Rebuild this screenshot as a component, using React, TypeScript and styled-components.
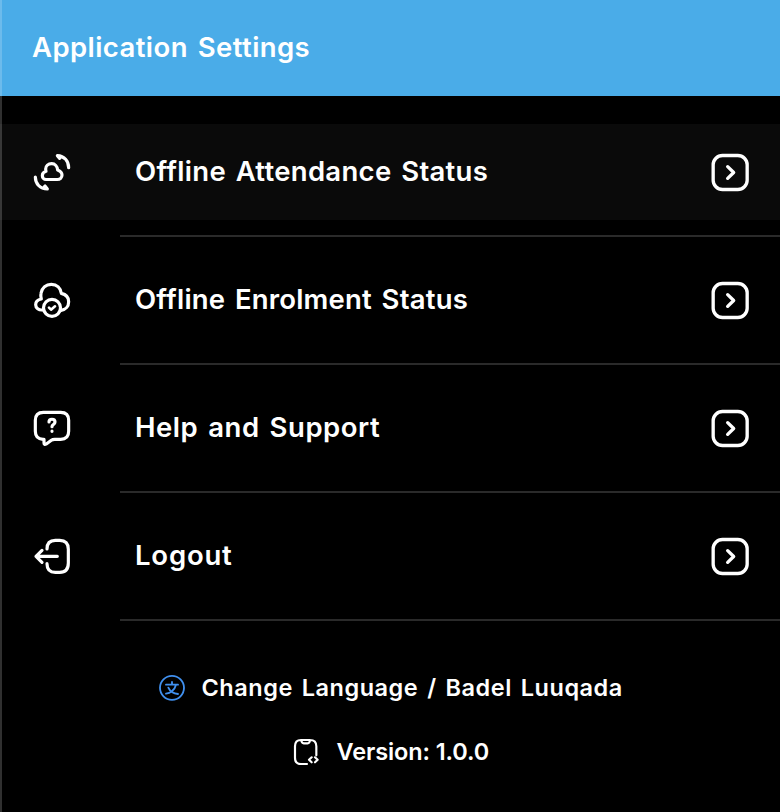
import React from 'react';
import styled, { createGlobalStyle } from 'styled-components';

const GlobalStyle = createGlobalStyle`
  * { box-sizing: border-box; }
  body { margin: 0; background: #000; }
`;

const Screen = styled.main`
  position: relative;
  display: flex;
  flex-direction: column;
  width: 100%;
  min-height: 812px;
  overflow: hidden;
  background: #000;
  color: #fff;
  font-family: Inter, 'Open Sans', sans-serif;
  font-weight: 600;
`;

const EdgeHighlight = styled.span`
  position: absolute;
  inset: 0 auto 0 0;
  width: 2px;
  background: rgba(255, 255, 255, 0.19);
`;

const Header = styled.header`
  display: flex;
  align-items: center;
  height: 96px;
  padding: 0 0 2px 32px;
  background: #4aace8;
`;

const Text = styled.span<{ $tracking: number; $size?: number; $gap?: number }>`
  font-size: ${(p) => p.$size ?? 27.5}px;
  line-height: 40px;
  letter-spacing: ${(p) => p.$tracking}px;
  word-spacing: ${(p) => p.$gap ?? 2.5}px;
  white-space: nowrap;
`;

const Title = styled(Text).attrs({ as: 'h1' })`
  margin: 0;
  font-weight: 600;
`;

const Menu = styled.ul`
  margin: 28px 0 0;
  padding: 0;
  list-style: none;
`;

const MenuItem = styled.li`
  height: 128px;
`;

const MenuRow = styled.div<{ $active?: boolean }>`
  display: grid;
  grid-template-columns: 64px 1fr 60px;
  align-items: center;
  height: 96px;
  padding: 0 20px;
  background: ${(p) => (p.$active ? '#0a0a0a' : 'transparent')};
`;

const MenuLabel = styled(Text)`
  padding: 0 0 2px 51px;
`;

const Divider = styled.hr`
  height: 2px;
  margin: 15px 0 0 120px;
  border: 0;
  background: #2a2a2a;
`;

const Footer = styled.footer`
  display: flex;
  flex-direction: column;
  align-items: flex-start;
  gap: 24px;
  padding-top: 32px;
`;

const FooterRow = styled.div<{ $indent: number }>`
  display: flex;
  align-items: center;
  gap: 13.5px;
  height: 40px;
  padding-left: ${(p) => p.$indent}px;
`;

const Icon = styled.svg<{ $size: number; $color?: string; $line?: number }>`
  display: block;
  flex: none;
  width: ${(p) => p.$size}px;
  height: ${(p) => p.$size}px;
  fill: none;
  stroke: ${(p) => p.$color ?? '#fff'};
  stroke-width: ${(p) => p.$line ?? 9.5};
  stroke-linecap: round;
  stroke-linejoin: round;
`;

const CloudSyncIcon = () => (
  <Icon $size={64} viewBox="0 0 192 192">
    <path d="M78 118.500H112C120 118.500 126 113 126 105C126 98 121 93 113 90C112 79 105 71 95 71C85 71 77 78 77 87C77 90 77.500 92 78 94C71 96 67 101 67 107C67 114 72 118.500 78 118.500Z" />
    <path d="M146 83C146 63 133 48 112 47L119 55L122 50M46 111C46 131 60 147 82 147L75 138L71 143" />
  </Icon>
);

const CloudCheckIcon = () => (
  <Icon $size={64} viewBox="0 0 192 192">
    <path d="M68 126C56 127 47 120 47 110C47 101 53 95 64 93C62 87 62 81 63 76C66 59 78 49 94 49C111 49 122 60 124 76C137 79 146 88 146 101C146 115 137 125 123 127" />
    <circle cx="96" cy="119.500" r="25.500" />
    <path strokeWidth="8" d="M87 119L93 125L105 115" />
  </Icon>
);

const HelpIcon = () => (
  <Icon $size={64} viewBox="0 0 192 192">
    <path d="M70 49H122Q146 49 146 73V106Q146 130 122 130H104Q98 130 94 133L79 144Q72 148 72 141V130H69Q46 129 46 106V73Q46 49 70 49Z" />
    <path d="M87 78C87 67 105 67 105 78C105 86 96 85 96 92M96 105.500V106" />
  </Icon>
);

const LogoutIcon = () => (
  <Icon $size={64} viewBox="0 0 192 192">
    <path d="M81 75C81 57 89 49 106 49H119C137 49 145 58 145 76V117C145 136 137 145 119 145H106C89 145 81 136 81 119" />
    <path d="M112 97H48M66 79L48 97L66 115" />
  </Icon>
);

const ChevronBoxIcon = () => (
  <Icon $size={60} $line={10} viewBox="0 0 180 180">
    <rect x="39.500" y="40.500" width="102" height="102" rx="28" />
    <path d="M83 74L101 91.500L83 109" />
  </Icon>
);

const LanguageIcon = () => (
  <Icon $size={32} $color="#4090ef" $line={5.5} viewBox="18 5 96 96">
    <circle cx="66" cy="52.500" r="36" />
    <path d="M48 43H84M66 35V43M78 43C74 59 61 69 48 70M55 52C60 63 72 70 84 71" />
  </Icon>
);

const VersionIcon = () => (
  <Icon $size={32} $line={6.5} viewBox="424 197 96 96">
    <path d="M500 255V228Q500 209 481 209H454Q436 209 436 228V262Q436 281 454 281H472M455 209Q456 219 462 219H474Q480 219 481 209M486 261L478 268.500L486 276M496 261L504 268.500L496 276" />
  </Icon>
);

const items = [
  { label: 'Offline Attendance Status', tracking: 0.3, icon: CloudSyncIcon, active: true },
  { label: 'Offline Enrolment Status', tracking: 0.2, icon: CloudCheckIcon },
  { label: 'Help and Support', tracking: 0.54, icon: HelpIcon },
  { label: 'Logout', tracking: 0.8, icon: LogoutIcon },
];

export default function App() {
  return (
    <Screen>
      <GlobalStyle />
      <Header>
        <Title $tracking={0.42}>Application Settings</Title>
      </Header>
      <Menu>
        {items.map(({ label, tracking, icon: ItemIcon, active }) => (
          <MenuItem key={label}>
            <MenuRow $active={active}>
              <ItemIcon />
              <MenuLabel $tracking={tracking}>{label}</MenuLabel>
              <ChevronBoxIcon />
            </MenuRow>
            <Divider />
          </MenuItem>
        ))}
      </Menu>
      <Footer>
        <FooterRow $indent={156}>
          <LanguageIcon />
          <Text $size={23.5} $tracking={0.52}>Change Language / Badel Luuqada</Text>
        </FooterRow>
        <FooterRow $indent={291}>
          <VersionIcon />
          <Text $size={23.5} $tracking={-0.1} $gap={0}>Version: 1.0.0</Text>
        </FooterRow>
      </Footer>
      <EdgeHighlight />
    </Screen>
  );
}
